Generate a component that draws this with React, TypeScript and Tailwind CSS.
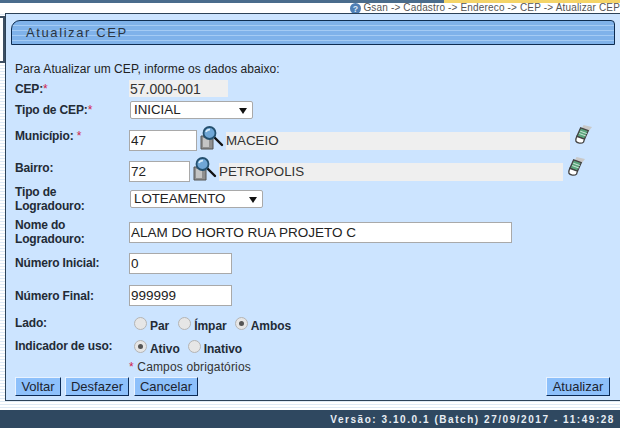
import { ReactNode } from 'react';

const font = "font-['Liberation_Sans',Arial,sans-serif]";

function Req() {
  return <span className="font-normal text-[#d0204a]">*</span>;
}

// linha do formulario: rotulo a esquerda, campos a partir de x=130
function Row({ label, className, labelClass, children }: { label?: ReactNode; className: string; labelClass?: string; children?: ReactNode }) {
  return (
    <div className={`flex items-center ${className}`}>
      <div className={`w-[115px] shrink-0 text-[12px] leading-[14px] font-bold tracking-[-0.15px] text-[#232b36] ${labelClass ?? ''}`}>{label}</div>
      {children}
    </div>
  );
}

function TextBox({ value, className }: { value: string; className: string }) {
  return (
    <input
      readOnly
      value={value}
      className={`h-[21px] border border-[#a9a9a9] bg-white px-px text-[13.5px] text-[#222] outline-none ${className}`}
    />
  );
}

function ReadOnly({ value, className }: { value: string; className: string }) {
  return (
    <div className={`flex items-center bg-[#efefef] leading-none text-[#333] ${className}`}>{value}</div>
  );
}

function SelectBox({ value, className }: { value: string; className: string }) {
  return (
    <div className={`relative flex h-[18px] items-center rounded-[2px] border border-[#a9a9a9] bg-white pl-[3px] text-[13.3px] text-[#222] ${className}`}>
      {value}
      <svg viewBox="0 0 8 6" className="absolute top-[6px] right-[5px] h-[6px] w-[8px]">
        <path d="M0 0H8L4 6Z" fill="#111" />
      </svg>
    </div>
  );
}

function Lupa() {
  return (
    <svg viewBox="0 0 24 24" className="h-[24px] w-[24px] shrink-0">
      <path d="M1 10H10L13 13V23H1Z" fill="#8f8f8f" stroke="#555" strokeWidth="1" />
      <path d="M3 12H9V21H3Z" fill="#c4c4c4" />
      <path d="M14 11L22 19" stroke="#111" strokeWidth="2.4" strokeLinecap="round" />
      <circle cx="9.5" cy="7" r="6" fill="#6fa6d6" stroke="#24506f" strokeWidth="1.8" />
      <path d="M6 6C6.5 4.5 8 3.5 10 3.6" stroke="#d8ecfa" strokeWidth="1.6" fill="none" />
    </svg>
  );
}

function Borracha() {
  return (
    <svg viewBox="0 0 20 22" className="h-[21px] w-[19px] shrink-0">
      <path d="M10 1L19 3L15 8L8 5Z" fill="#c9c9c9" />
      <path d="M7 4L15 7L11 16L3 13Z" fill="#5aa57c" stroke="#444" strokeWidth="1.4" />
      <path d="M6.5 7.5L13.5 10M5.5 10L12.5 12.5" stroke="#d2eadb" strokeWidth="1" />
      <path d="M3 13L11 16L10 19C8 21 3 20 2 18C1.5 16.5 2 15 3 13Z" fill="#fff" stroke="#444" strokeWidth="1.4" />
    </svg>
  );
}

function Radio({ label, checked, className }: { label: string; checked?: boolean; className: string }) {
  return (
    <div className={`flex items-center ${className}`}>
      <span className="flex h-[13px] w-[13px] items-center justify-center rounded-full border border-[#b4b4b4] bg-[#e6e6e6]">
        {checked && <span className="h-[5px] w-[5px] rounded-full bg-[#555]" />}
      </span>
      <span className="mt-[5px] ml-[3px] text-[12px] font-bold leading-[14px] tracking-[-0.05px] text-[#232b36]">{label}</span>
    </div>
  );
}

function Botao({ label, className }: { label: string; className: string }) {
  return (
    <button className={`h-[19px] border border-[#e8f2ff] border-r-[#0b2a55] border-b-[#0b2a55] bg-[#8dc0fb] text-[13px] leading-none text-[#1c2430] ${className}`}>
      {label}
    </button>
  );
}

export default function App() {
  return (
    <div className={`flex h-[428px] w-[620px] flex-col overflow-hidden bg-[repeating-linear-gradient(180deg,#ffffff_0px,#ffffff_2px,#dfeaf5_2px,#dfeaf5_3px)] ${font}`}>
      {/* faixa superior */}
      <div className="flex h-[3px] shrink-0">
        <div className="w-[444px] bg-[#4a6c8c]" />
        <div className="flex-1 bg-[#f4d468]" />
      </div>

      {/* caminho */}
      <div className="flex h-[10px] shrink-0 items-center justify-end bg-white text-[10px] leading-none tracking-[0.16px] whitespace-nowrap text-[#555]">
        <svg viewBox="0 0 10 10" className="mr-[2px] h-[11px] w-[11px]">
          <circle cx="5" cy="5" r="5" fill="#4f7fb5" />
          <text x="5" y="8" fontSize="8" fontWeight="bold" textAnchor="middle" fill="#dbe8f5">?</text>
        </svg>
        Gsan -&gt; Cadastro -&gt; Endereco -&gt; CEP -&gt; Atualizar CEP
      </div>

      <div className="flex h-[388px] shrink-0">
        {/* sobra do menu lateral */}
        <div className="w-[5px] shrink-0 pt-[3px]">
          <div className="h-[47px] border-y-2 border-r-2 border-[#3d4f63] bg-white" />
        </div>

        <div className="flex-1 border border-r-0 border-[#2c4258] bg-[#cce4ff] pt-[6px]">
          <div className="ml-[5px] flex h-[25px] w-[604px] items-center rounded-tl-[9px] rounded-tr-[4px] border border-[#0e2c50] bg-[repeating-linear-gradient(180deg,#7fb2ea_0px,#7fb2ea_4px,#a4cbf4_4px,#a4cbf4_5px)] pl-[14px] text-[13px] tracking-[1.6px] text-[#2a3542]">
            Atualizar CEP
          </div>

          <div className="pl-[9px]">
            <div className="mt-[17px] h-[14px] text-[12px] leading-[14px] tracking-[0.06px] text-[#222]">
              Para Atualizar um CEP, informe os dados abaixo:
            </div>

            <Row className="mt-[4px] h-[17px]" label={<>CEP:<Req /></>}>
              <ReadOnly value="57.000-001" className="-ml-px h-[17px] w-[99px] pl-px text-[14px]" />
            </Row>

            <Row className="mt-[4px] h-[18px]" label={<>Tipo de CEP:<Req /></>}>
              <SelectBox value="INICIAL" className="w-[123px]" />
            </Row>

            <Row className="mt-[11px] h-[21px]" labelClass="mb-[10px]" label={<>Município: <Req /></>}>
              <TextBox value="47" className="-ml-px w-[68px]" />
              <div className="mb-[6px] ml-[3px]"><Lupa /></div>
              <ReadOnly value="MACEIO" className="ml-[2px] h-[18px] w-[344px] text-[13.33px]" />
              <div className="mb-[12px] ml-[4px]"><Borracha /></div>
            </Row>

            <Row className="mt-[10px] h-[21px]" labelClass="mb-[8px]" label="Bairro:">
              <TextBox value="72" className="-ml-px w-[61px]" />
              <div className="mb-[6px] ml-[3px]"><Lupa /></div>
              <ReadOnly value="PETROPOLIS" className="ml-[2px] h-[18px] w-[344px] text-[13.33px]" />
              <div className="mb-[10px] ml-[4px]"><Borracha /></div>
            </Row>

            <Row className="mt-[3px] h-[28px]" label={<>Tipo de<br />Logradouro:</>}>
              <SelectBox value="LOTEAMENTO" className="w-[133px]" />
            </Row>

            <Row className="mt-[5px] h-[28px]" label={<>Nome do<br />Logradouro:</>}>
              <TextBox value="ALAM DO HORTO RUA PROJETO C" className="-ml-px w-[383px]" />
            </Row>

            <Row className="mt-[7px] h-[21px]" labelClass="mb-[2px]" label="Número Inicial:">
              <TextBox value="0" className="-ml-px w-[103px]" />
            </Row>

            <Row className="mt-[11px] h-[21px]" label="Número Final:">
              <TextBox value="999999" className="-ml-px w-[103px]" />
            </Row>

            <Row className="mt-[9px] h-[16px]" label="Lado:">
              <Radio label="Par" className="ml-[4px]" />
              <Radio label="Ímpar" className="ml-[9px]" />
              <Radio label="Ambos" checked className="ml-[8px]" />
            </Row>

            <Row className="mt-[7px] h-[16px]" label="Indicador de uso:">
              <Radio label="Ativo" checked className="ml-[4px]" />
              <Radio label="Inativo" className="ml-[8px]" />
            </Row>

            <div className="mt-[6px] ml-[114px] h-[14px] text-[12px] leading-[14px] tracking-[0.15px] text-[#333]">
              <Req /> Campos obrigatórios
            </div>

            <div className="mt-[3px] flex h-[19px]">
              <Botao label="Voltar" className="w-[46px]" />
              <Botao label="Desfazer" className="ml-[4px] w-[64px]" />
              <Botao label="Cancelar" className="ml-[5px] w-[64px]" />
              <Botao label="Atualizar" className="mr-[10px] ml-auto w-[64px]" />
            </div>
          </div>
        </div>
      </div>

      <div className="h-[9px] shrink-0" />

      <div className="flex h-[18px] shrink-0 items-center justify-end bg-[#2f4860] pr-[5px] text-[10px] font-bold tracking-[1.55px] whitespace-nowrap text-[#e8eef4]">
        Versão: 3.10.0.1 (Batch) 27/09/2017 - 11:49:28
      </div>
    </div>
  );
}
